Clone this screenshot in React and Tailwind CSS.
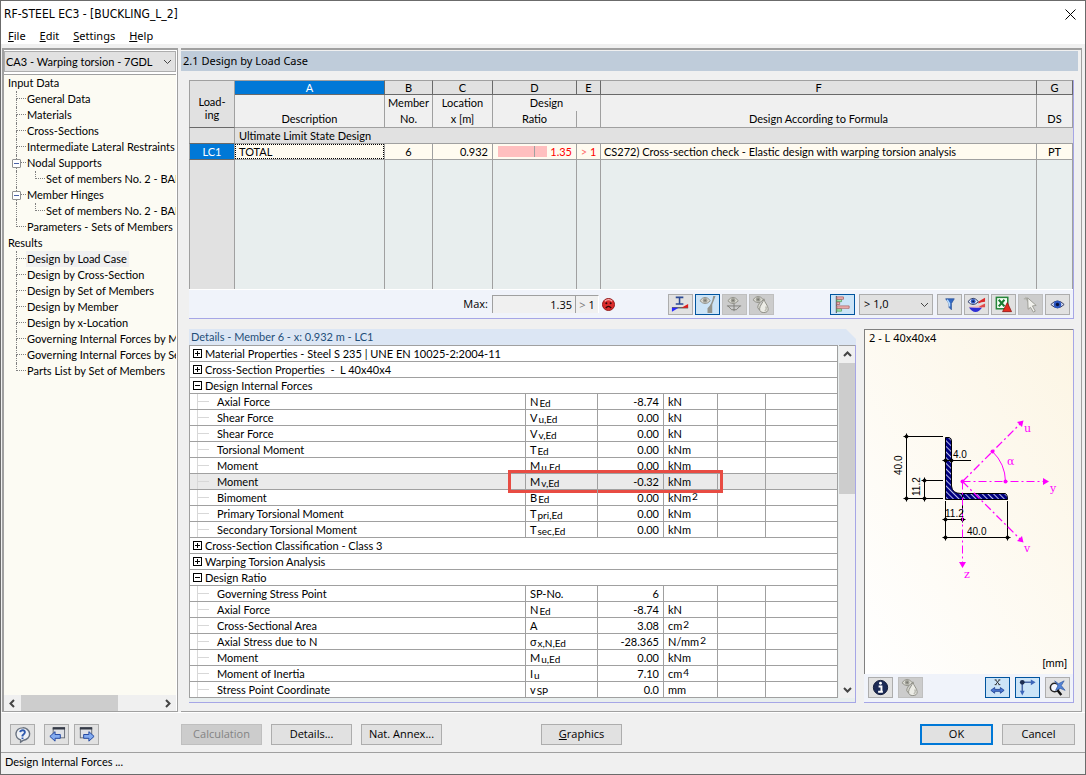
import React, { useState } from "react";

const TREE = [
  { label: "Input Data", level: 0 },
  { label: "General Data", level: 1 },
  { label: "Materials", level: 1 },
  { label: "Cross-Sections", level: 1 },
  { label: "Intermediate Lateral Restraints", level: 1 },
  { label: "Nodal Supports", level: 1, open: true },
  { label: "Set of members No. 2 - BARRA", level: 2 },
  { label: "Member Hinges", level: 1, open: true },
  { label: "Set of members No. 2 - BARRA", level: 2 },
  { label: "Parameters - Sets of Members", level: 1, last: true },
  { label: "Results", level: 0 },
  { label: "Design by Load Case", level: 1, active: true },
  { label: "Design by Cross-Section", level: 1 },
  { label: "Design by Set of Members", level: 1 },
  { label: "Design by Member", level: 1 },
  { label: "Design by x-Location", level: 1 },
  { label: "Governing Internal Forces by Member", level: 1 },
  { label: "Governing Internal Forces by Set of Members", level: 1 },
  { label: "Parts List by Set of Members", level: 1, last: true },
];

const DETAILS = [
  { group: "Material Properties - Steel S 235 | UNE EN 10025-2:2004-11" },
  { group: "Cross-Section Properties  -  L 40x40x4" },
  { group: "Design Internal Forces", open: true },
  { name: "Axial Force", sym: "N", sub: "Ed", value: "-8.74", unit: "kN" },
  { name: "Shear Force", sym: "V", sub: "u,Ed", value: "0.00", unit: "kN" },
  { name: "Shear Force", sym: "V", sub: "v,Ed", value: "0.00", unit: "kN" },
  { name: "Torsional Moment", sym: "T", sub: "Ed", value: "0.00", unit: "kNm" },
  { name: "Moment", sym: "M", sub: "u,Ed", value: "0.00", unit: "kNm" },
  { name: "Moment", sym: "M", sub: "v,Ed", value: "-0.32", unit: "kNm", marked: true },
  { name: "Bimoment", sym: "B", sub: "Ed", value: "0.00", unit: "kNm", sup: "2" },
  { name: "Primary Torsional Moment", sym: "T", sub: "pri,Ed", value: "0.00", unit: "kNm" },
  { name: "Secondary Torsional Moment", sym: "T", sub: "sec,Ed", value: "0.00", unit: "kNm" },
  { group: "Cross-Section Classification - Class 3" },
  { group: "Warping Torsion Analysis" },
  { group: "Design Ratio", open: true },
  { name: "Governing Stress Point", sym: "SP-No.", value: "6", unit: "" },
  { name: "Axial Force", sym: "N", sub: "Ed", value: "-8.74", unit: "kN" },
  { name: "Cross-Sectional Area", sym: "A", value: "3.08", unit: "cm", sup: "2" },
  { name: "Axial Stress due to N", sym: "σ", sub: "x,N,Ed", value: "-28.365", unit: "N/mm", sup: "2" },
  { name: "Moment", sym: "M", sub: "u,Ed", value: "0.00", unit: "kNm" },
  { name: "Moment of Inertia", sym: "I", sub: "u", value: "7.10", unit: "cm", sup: "4" },
  { name: "Stress Point Coordinate", sym: "v", sub: "SP", value: "0.0", unit: "mm" },
];

const Chevron = ({ dir, className }) => {
  const paths = {
    up: "M1 6 L4.5 2.5 L8 6",
    down: "M1 3 L4.5 6.5 L8 3",
    left: "M6 1 L2.5 4.5 L6 8",
    right: "M3 1 L6.5 4.5 L3 8",
  };
  return (
    <svg viewBox="0 0 9 9" className={className} fill="none" stroke="currentColor">
      <path d={paths[dir]} />
    </svg>
  );
};

const Eye = ({ x = 0, y = 0, gray }) => (
  <g transform={`translate(${x} ${y})`}>
    <path
      d="M0 4 Q5.500 -3 11 4 Q5.500 10 0 4Z"
      fill={gray ? "#dcdcd4" : "#e8eefc"}
      stroke={gray ? "#8f8f87" : "#23305e"}
    />
    <circle cx="5.500" cy="3.700" r="2.500" fill={gray ? "#a0a098" : "#2c57c4"} />
    <circle cx="5.500" cy="3.700" r="1" fill={gray ? "#787870" : "#081648"} />
  </g>
);

const ICONS = {
  section: (
    <>
      <path d="M6 2.500H14M6 9.500H14M10 2.500V9.500" stroke="#2c4a94" strokeWidth="1.600" fill="none" />
      <path d="M2 13.500H19" stroke="#222" />
      <path d="M2 13.500V17.500L9 13.500Z" fill="#2a2aff" />
      <path d="M12 13.500L19 9.500V13.500Z" fill="#e01b1b" />
    </>
  ),
  ratio: (
    <>
      <path d="M11 19V14Q16 9 17 1H19.500L16 10V19Z" fill="#94948c" />
      <Eye x="3" y="2" gray />
    </>
  ),
  support: (
    <>
      <path d="M3 11.500H18M4 11.500L8 15.500H13L17 11.500M10.500 8V17" stroke="#80807a" fill="none" />
      <Eye x="4" y="2" gray />
    </>
  ),
  drop: (
    <>
      <path d="M9.500 5C10 9 7 10 7 13Q8 16 10 16" fill="#d8d8d0" stroke="#8d8d85" />
      <Eye x="2" y="1" gray />
      <path d="M13.500 4C14 8 18 11 18 14.500A4.500 4 0 0 1 9 14.500C9 11 13 8 13.500 4Z" fill="#ecece6" stroke="#8d8d85" />
      <path d="M15.500 12Q17 15 14.500 17" stroke="#bcbcb4" strokeWidth="1.500" fill="none" />
    </>
  ),
  bars: (
    <>
      <path d="M4.500 1V19" stroke="#444" />
      <path d="M5 4.500H10V7H5ZM5 14.500H10V17H5Z" fill="#a7e5ad" stroke="#4d9c5b" strokeWidth=".8" />
      <path d="M5 2H12V4.500H5ZM5 7.500H8V10H5ZM5 11.500H18V14H5Z" fill="#f4b6b6" stroke="#a75c5c" strokeWidth=".8" />
    </>
  ),
  filter: (
    <>
      <path d="M7 4H16L13 9V15.500L10.500 13V9Z" fill="#3268c4" stroke="#2a5298" strokeWidth=".8" />
      <path d="M8.500 5L11 9V12" fill="none" stroke="#b8dcff" strokeWidth="1.500" />
    </>
  ),
  colors: (
    <>
      <path d="M13 7Q16 5 20 3V7Q16 7 13 9Z" fill="#de2929" />
      <path d="M3 13H17Q14 18 10 18T3 13" fill="#2e2ed5" />
      <path d="M3 12Q12 12 19 9V13Q12 14 3 13" fill="#f3c0c0" />
      <path d="M14 12L20 9V13H14Z" fill="#e14b4b" />
      <Eye x="2" y="3" />
    </>
  ),
  excel: (
    <>
      <rect x="3.500" y="2.500" width="12" height="12" fill="#f7fff6" stroke="#26863a" strokeWidth="1.600" />
      <path d="M6 5L12 12M12 5L6 12" stroke="#1a7d32" strokeWidth="2.200" />
      <path d="M15 8L19.500 17.500H10Z" fill="#e32d20" stroke="#8c1212" strokeWidth=".8" />
    </>
  ),
  pick: (
    <>
      <path d="M4 4H9M6 2L8 7" stroke="#a6a69e" fill="none" />
      <path d="M8 3L17 11L13 11.500L16 17L14 18L11 13L8.500 15Z" fill="#f1f1ed" stroke="#9b9b93" />
    </>
  ),
  view: (
    <>
      <path d="M4 10Q11 2.500 18 10Q11 17 4 10Z" fill="#dfe7fb" stroke="#30375e" />
      <circle cx="11" cy="10" r="4" fill="#2b56c0" />
      <circle cx="11" cy="10" r="1.800" fill="#0a1440" />
    </>
  ),
  info: (
    <>
      <circle cx="11" cy="10" r="7.500" fill="#1c2b57" stroke="#0c1533" />
      <path d="M9 9H12V14M8.500 14.500H13.500" stroke="#fff" strokeWidth="2" fill="none" />
      <circle cx="11" cy="5.500" r="1.500" fill="#fff" />
    </>
  ),
  dimension: (
    <>
      <path d="M9 2L13 7M13 2L9 7M8 2H10M12 2H14M8 7H10M12 7H14" stroke="#333" />
      <path d="M4 13L8 10V12H14V10L18 13L14 16V14H8V16Z" fill="#4a76d2" stroke="#284b9a" />
    </>
  ),
  axes: (
    <>
      <path d="M5.500 15V4.500H16" stroke="#4a68a6" strokeWidth="1.600" fill="none" />
      <path d="M14.500 1.500L19.500 4.500L14.500 7.500ZM3 13.500H8L5.500 18.500Z" fill="#3d66ba" />
      <circle cx="5.500" cy="4.500" r="2.500" fill="#1d2d50" />
    </>
  ),
  zoom: (
    <>
      <circle cx="8" cy="10" r="4.500" fill="#f5f8ff" stroke="#252525" strokeWidth="1.600" />
      <path d="M11 13L15 18" stroke="#111" strokeWidth="2.500" />
      <path d="M8 3L12 6L18 3L15 8L19 13L14 11L9 13L11.500 8Z" fill="#5283d8" stroke="#31589d" strokeWidth=".7" />
    </>
  ),
  help: (
    <>
      <path d="M11 3A7 6.500 0 0 1 12 16L9 18V15.700A7 6.500 0 0 1 11 3Z" fill="#eef1f6" stroke="#68717f" strokeWidth="1.500" />
      <path d="M8.500 7.500Q9 5.500 11.300 5.500T13.500 8Q13.500 9 11 11V12" fill="none" stroke="#2d58ae" strokeWidth="2" />
      <path d="M10 14H12" stroke="#2d58ae" strokeWidth="1.600" />
    </>
  ),
  previous: (
    <>
      <rect x="7.500" y="3.500" width="12" height="10" fill="#dfe1e6" stroke="#676d78" />
      <path d="M7 3.500H20" stroke="#333945" strokeWidth="2.500" />
      <path d="M4 12L9.500 7V10H15V14H9.500V17Z" fill="#83abf0" stroke="#2146a0" />
    </>
  ),
  next: (
    <>
      <rect x="4.500" y="3.500" width="12" height="10" fill="#dfe1e6" stroke="#676d78" />
      <path d="M4 3.500H17" stroke="#333945" strokeWidth="2.500" />
      <path d="M19 12L13.500 7V10H8V14H13.500V17Z" fill="#83abf0" stroke="#2146a0" />
    </>
  ),
};

const IconButton = ({ icon, label, active, disabled }) => {
  let tone = "border-[#adadad] bg-[#e1e1e1]";
  if (active) tone = "border-[#00549e] bg-[#cce4f7]";
  if (disabled) tone = "border-[#bfbfbf] bg-[#cccccc]";
  return (
    <button
      type="button"
      aria-label={label}
      disabled={disabled}
      className={`flex h-[21px] w-[25px] shrink-0 items-center justify-center border ${tone}`}
    >
      <svg viewBox="0 0 22 20" className="h-[19px] w-[21px]">
        {ICONS[icon]}
      </svg>
    </button>
  );
};

const PushButton = ({ children, className, disabled }) => (
  <button
    type="button"
    disabled={disabled}
    className={`h-[21px] shrink-0 font-['Open_Sans',sans-serif] text-[11px] leading-4 ${className} ${
      disabled ? "border border-[#bfbfbf] bg-[#cccccc] text-[#838383]" : "bg-[#e1e1e1]"
    }`}
  >
    {children}
  </button>
);

const TreeItem = ({ item }) => {
  if (item.level === 0) {
    return <li className="h-4 pl-1">{item.label}</li>;
  }
  return (
    <li className="flex h-4">
      {item.level === 2 && <span className="ml-3 w-[19px] shrink-0 border-l border-dotted border-[#808080]" />}
      <span className={`relative w-[10px] shrink-0 ${item.level === 1 ? "ml-3" : ""}`}>
        <span className="block h-2 border-b border-l border-dotted border-[#808080]" />
        {!item.last && item.level === 1 && (
          <span className="block h-2 border-l border-dotted border-[#808080]" />
        )}
        {item.open && (
          <button
            type="button"
            aria-label={`Collapse ${item.label}`}
            className="absolute top-1 -left-1 flex size-[9px] items-center justify-center rounded-[1px] border border-[#919191] bg-white"
          >
            <span className="h-px w-[5px] bg-[#4b63a7]" />
          </button>
        )}
      </span>
      <a href="#" className={`pr-[2px] pl-px whitespace-nowrap ${item.active ? "bg-[#f0f0f0]" : ""}`}>
        {item.label}
      </a>
    </li>
  );
};

const Sidebar = () => (
  <aside className="flex w-[176px] shrink-0 flex-col border-t-2 border-r border-b border-l-2 border-[#a0a0a0] bg-white pt-px pr-px">
    <div className="relative">
      <select
        aria-label="Design case"
        className="h-[21px] w-full appearance-none border border-[#adadad] bg-[#e1e1e1] pl-px text-[11px] leading-4"
      >
        <option>CA3 - Warping torsion - 7GDL</option>
      </select>
      <Chevron dir="down" className="pointer-events-none absolute top-[6px] right-1 size-[9px] text-[#444]" />
    </div>
    <ul className="mt-[2px] flex-1 overflow-hidden border-t border-[#a0a0a0] bg-[#fcfbf3] text-[11px] leading-4">
      {TREE.map((item, index) => (
        <TreeItem key={index} item={item} />
      ))}
    </ul>
    <div className="flex h-4 items-center bg-[#f0f0f0] text-[#444]">
      <Chevron dir="left" className="mx-1 size-[9px] stroke-2" />
      <span className="h-full w-[97px] bg-[#cdcdcd]" />
      <Chevron dir="right" className="mr-1 ml-auto size-[9px] stroke-2" />
    </div>
  </aside>
);

const LETTER = "h-[15px] border-t border-r border-b border-t-[#a0a0a0] border-r-[#696969] border-b-[#696969] bg-[#e1e1e1] p-0 font-normal leading-[13px]";
const HEAD = "h-[33px] border-r border-b border-[#a0a0a0] bg-[#f0f0f0] p-0 align-bottom font-normal";
const CELL = "h-4 border-r border-b border-[#a0a0a0] bg-[#fffbf0] p-0 leading-[15px]";
const EMPTY = "h-[129px] border-r border-[#a0a0a0] bg-[#e8eeee] p-0";

const ResultTable = () => (
  <table className="w-full table-fixed border-separate border-spacing-0 text-center text-[11px] leading-4">
    <colgroup>
      <col className="w-[46px]" />
      <col className="w-[150px]" />
      <col className="w-[48px]" />
      <col className="w-[60px]" />
      <col className="w-[84px]" />
      <col className="w-[24px]" />
      <col />
      <col className="w-[36px]" />
    </colgroup>
    <thead>
      <tr>
        <th rowSpan={2} className="border border-[#a0a0a0] border-b-[#696969] bg-[#e1e1e1] p-0 pt-2 leading-[13px] font-normal">
          Load-
          <br />
          ing
        </th>
        <th className="h-[15px] border-t border-r border-b border-t-[#a0a0a0] border-r-[#696969] border-b-[#696969] bg-[#0078d7] p-0 leading-[13px] font-normal text-white">
          A
        </th>
        {["B", "C", "D", "E", "F", "G"].map((letter) => (
          <th key={letter} className={LETTER}>
            {letter}
          </th>
        ))}
      </tr>
      <tr>
        <th className={HEAD}>Description</th>
        <th className={HEAD}>Member<br />No.</th>
        <th className={HEAD}>Location<br />x [m]</th>
        <th colSpan={2} className={HEAD}>
          <span className="block">Design</span>
          <span className="flex">
            <span className="w-[84px] border-r border-[#a0a0a0]">Ratio</span>
          </span>
        </th>
        <th className={HEAD}>Design According to Formula</th>
        <th className={HEAD}>DS</th>
      </tr>
    </thead>
    <tbody>
      <tr>
        <td className="h-4 border-x border-b border-[#a0a0a0] border-b-[#696969] bg-[#e1e1e1] p-0" />
        <td colSpan={7} className="h-4 border-b border-[#a0a0a0] bg-[#e1e1e1] p-0 pl-1 text-left leading-[15px]">
          Ultimate Limit State Design
        </td>
      </tr>
      <tr>
        <td className="h-4 border-x border-b border-[#a0a0a0] border-b-[#696969] bg-[#0078d7] p-0 leading-[15px] text-white">LC1</td>
        <td className="h-4 border-r border-b border-[#a0a0a0] bg-[#fffbf0] p-0 text-left">
          <span className="block h-[15px] border border-dotted border-black pl-[3px] leading-[13px]">TOTAL</span>
        </td>
        <td className={CELL}>6</td>
        <td className={`${CELL} pr-1 text-right`}>0.932</td>
        <td className={`${CELL} text-[#ff0000]`}>
          <span className="flex items-center justify-between pr-1 pl-[5px]">
            <span className="flex h-[11px] w-[49px] bg-[#ffbfbf]">
              <span className="w-[37px] border-r border-[#a0a0a0]" />
            </span>
            1.35
          </span>
        </td>
        <td className={`${CELL} text-[#ff0000]`}>
          <span className="text-[#ff7070]">&gt;</span> 1
        </td>
        <td className={`${CELL} truncate pl-[3px] text-left`}>
          CS272) Cross-section check - Elastic design with warping torsion analysis
        </td>
        <td className={CELL}>PT</td>
      </tr>
      <tr>
        <td className="h-[129px] border-x border-[#a0a0a0] bg-[#e1e1e1] p-0" />
        {[1, 2, 3, 4, 5, 6, 7].map((col) => (
          <td key={col} className={EMPTY} />
        ))}
      </tr>
    </tbody>
  </table>
);

const ResultFooter = () => (
  <div className="flex h-[29px] items-center border-t border-white bg-[#f0f3fa] pr-[3px] font-['Open_Sans',sans-serif] text-[11px] leading-4">
    <label htmlFor="max-ratio" className="w-[303px] pr-1 text-right">
      Max:
    </label>
    <input
      id="max-ratio"
      readOnly
      value="1.35"
      className="h-[18px] w-[84px] border-t border-r border-l border-[#a0a0a0] bg-[#f0f0f0] pr-[3px] text-right"
    />
    <span className="h-[18px] w-[23px] border-t border-r border-[#a0a0a0] border-r-white bg-[#f0f0f0] text-center leading-[18px]">
      <span className="text-[#777]">&gt;</span> 1
    </span>
    <svg viewBox="0 0 14 14" className="ml-[3px] size-[13px]" aria-label="Design ratio exceeded">
      <circle cx="7" cy="7" r="6.500" fill="#dc2c2c" stroke="#8e1515" />
      <path d="M3 3.500Q7 0 11 3.500" stroke="#f9b0b0" strokeWidth="1.500" fill="none" />
      <circle cx="4.700" cy="5.700" r="1.100" fill="#310808" />
      <circle cx="9.300" cy="5.700" r="1.100" fill="#310808" />
      <path d="M4 11Q7 7 10 11" stroke="#310808" strokeWidth="1.400" fill="none" />
    </svg>
    <div className="ml-auto flex gap-[2px]">
      <IconButton icon="section" label="Cross-section" />
      <IconButton icon="ratio" label="Show ratio" active />
      <IconButton icon="support" label="Show supports" disabled />
      <IconButton icon="drop" label="Show fire results" disabled />
    </div>
    <div className="ml-14 flex items-center">
      <IconButton icon="bars" label="Color bars" active />
      <div className="relative ml-1">
        <select
          aria-label="Ratio filter"
          className="h-[21px] w-[74px] appearance-none border border-[#adadad] bg-[#e1e1e1] pl-1 text-[11px] leading-4"
        >
          <option>&gt; 1,0</option>
        </select>
        <Chevron dir="down" className="pointer-events-none absolute top-[6px] right-1 size-[9px] text-[#444]" />
      </div>
      <div className="ml-1 flex gap-[2px]">
        <IconButton icon="filter" label="Filter" />
        <IconButton icon="colors" label="Color scale" />
        <IconButton icon="excel" label="Export to Excel" />
        <IconButton icon="pick" label="Pick member" disabled />
        <IconButton icon="view" label="View mode" />
      </div>
    </div>
  </div>
);

const DetailRow = ({ row }) => {
  if (row.group) {
    return (
      <tr>
        <td colSpan={6} className="h-4 border-x border-b border-[#a0a0a0] p-0">
          <span className="flex items-center pl-[3px] leading-[15px] whitespace-pre">
            <button
              type="button"
              aria-label={row.open ? "Collapse" : "Expand"}
              className="mr-[3px] flex size-[9px] items-center justify-center border border-black"
            >
              <svg viewBox="0 0 5 5" className="size-[5px]" stroke="#000" shapeRendering="crispEdges">
                <path d={row.open ? "M0 2.500H5" : "M0 2.500H5M2.500 0V5"} />
              </svg>
            </button>
            {row.group}
          </span>
        </td>
      </tr>
    );
  }
  const cell = "h-4 border-r border-b border-[#a0a0a0] p-0 leading-[15px]";
  return (
    <tr className={row.marked ? "bg-[#eaeaea]" : ""}>
      <td className={`${cell} border-l`}>
        <span className="flex h-[15px]">
          <span className="ml-[7px] flex w-5 items-center border-l border-[#d8d8d8]">
            <span className="h-px w-[11px] bg-[#d8d8d8]" />
          </span>
          {row.name}
        </span>
      </td>
      <td className={`${cell} relative pl-1`}>
        {row.sym}
        {row.sub && <sub className="bottom-[-1px] ml-px text-[10px]">{row.sub}</sub>}
        {row.marked && (
          <span className="absolute top-[-4px] left-[-18px] h-[23px] w-[215px] border-3 border-[#e84c43]" />
        )}
      </td>
      <td className={`${cell} pr-1 text-right`}>{row.value}</td>
      <td className={`${cell} pl-1`}>
        {row.unit}
        {row.sup && <sup className="top-[-2px] ml-px text-[10px]">{row.sup}</sup>}
      </td>
      <td className={cell} />
      <td className={cell} />
    </tr>
  );
};

const DetailsPanel = () => (
  <section className="flex min-w-0 flex-1 flex-col">
    <h2 className="h-4 bg-[#dce6f4] pl-[2px] text-[11px] leading-4 text-[#1f4e79] [clip-path:polygon(0_0,calc(100%-10px)_0,100%_10px,100%_100%,0_100%)]">
      Details - Member 6 - x: 0.932 m - LC1
    </h2>
    <div className="flex flex-1 border-r border-b border-[#a6a6e6] bg-[#e8eeee] pb-1">
      <table className="min-w-0 flex-1 table-fixed border-separate border-spacing-0 border-t border-[#a0a0a0] bg-white text-[11px] leading-4">
        <colgroup>
          <col />
          <col className="w-[72px]" />
          <col className="w-[66px]" />
          <col className="w-[54px]" />
          <col className="w-[48px]" />
          <col className="w-[72px]" />
        </colgroup>
        <tbody>
          {DETAILS.map((row, index) => (
            <DetailRow key={index} row={row} />
          ))}
        </tbody>
      </table>
      <div className="ml-px flex w-4 flex-col items-center border-t border-[#a0a0a0] bg-[#f0f0f0] text-[#444]">
        <Chevron dir="up" className="my-1 size-[9px] stroke-2" />
        <span className="h-[131px] w-full bg-[#cdcdcd]" />
        <Chevron dir="down" className="mt-auto mb-1 size-[9px] stroke-2" />
      </div>
    </div>
  </section>
);

const Tick = ({ x, y }) => (
  <>
    <circle cx={x} cy={y} r="1.500" fill="#000" />
    <path d={`M${x - 3} ${y}H${x + 3}M${x} ${y - 3}V${y + 3}`} />
  </>
);

const AngleSection = () => (
  <svg viewBox="0 0 208 200" className="mx-auto w-[208px]">
    <defs>
      <pattern id="hatch" width="4" height="4" patternUnits="userSpaceOnUse" patternTransform="rotate(-45)">
        <rect width="4" height="4" fill="#000080" />
        <path d="M0.500 0V4" stroke="#b8bde8" strokeWidth="1" />
      </pattern>
    </defs>
    <path
      d="M80.500 37.500H84Q86.500 38 86.500 41V86Q87 93.500 96 93.500H140Q142.500 94 142.500 99.500H80.500Z"
      fill="url(#hatch)"
      stroke="#000"
    />
    <g stroke="#000" fill="none">
      <path d="M41.500 36.500V98.500M41.500 36.500H78M41.500 98.500H78" />
      <path d="M59.500 80.500V98.500M59.500 80.500H78" />
      <path d="M80 60.500H106" />
      <path d="M80.500 101V138M142.500 101V138M97.500 95V120M80.500 119.500H97.500M80.500 137.500H142.500" />
      <Tick x={41.5} y={36.5} />
      <Tick x={41.5} y={98.5} />
      <Tick x={59.5} y={80.5} />
      <Tick x={59.5} y={98.5} />
      <Tick x={80.5} y={60.5} />
      <Tick x={86.5} y={60.5} />
      <Tick x={80.5} y={119.5} />
      <Tick x={97.5} y={119.5} />
      <Tick x={80.5} y={137.5} />
      <Tick x={142.5} y={137.5} />
    </g>
    <g stroke="#ff00ff" fill="none" strokeDasharray="8 3 2 3">
      <path d="M97.500 81.500H178" />
      <path d="M97.500 81.500V162" />
      <path d="M97.500 81.500L155 24" strokeWidth="1.300" />
      <path d="M97.500 81.500L155 139" strokeWidth="1.300" />
    </g>
    <path d="M127.500 51.500A43 43 0 0 1 140.500 81.500" stroke="#ff00ff" fill="none" />
    <g fill="#ff00ff">
      <path d="M184 81.500L178 78V85ZM97.500 168L94 162H101ZM158.500 20.500L157 27L152 22ZM158.500 142.500L152 141L157 136Z" />
      <circle cx="97.500" cy="81.500" r="2" />
      <circle cx="127.500" cy="51.500" r="2" />
      <circle cx="140.500" cy="81.500" r="2" />
    </g>
    <g className="font-['Liberation_Sans',sans-serif] text-[10px]">
      <text x="88" y="58">4.0</text>
      <text x="80" y="117">11.2</text>
      <text x="102" y="135">40.0</text>
      <text transform="translate(37 75) rotate(-90)">40.0</text>
      <text transform="translate(55 96) rotate(-90)">11.2</text>
    </g>
    <g fill="#ff00ff" className="font-['DejaVu_Serif',serif] text-[11px]">
      <text x="159" y="32">u</text>
      <text x="185" y="92">y</text>
      <text x="159" y="152">v</text>
      <text x="99" y="178">z</text>
      <text x="142" y="65">α</text>
    </g>
  </svg>
);

const SectionPanel = () => (
  <section className="flex w-[210px] shrink-0 flex-col border-r border-b border-[#a6a6e6]">
    <div className="flex flex-1 flex-col border-t border-l border-[#808080] bg-linear-to-tr from-white to-[#fcf5e4] text-[11px] leading-4">
      <h2 className="pl-1 font-['Noto_Sans',sans-serif]">2 - L 40x40x4</h2>
      <div className="flex-1 pt-[54px]">
        <AngleSection />
      </div>
      <p className="pr-[6px] pb-[3px] text-right font-['Liberation_Sans',sans-serif]">[mm]</p>
    </div>
    <div className="flex h-[28px] items-center bg-[#f0f3fa] pr-[3px] pb-px pl-1">
      <IconButton icon="info" label="Section info" />
      <span className="ml-[5px]">
        <IconButton icon="drop" label="Section fire view" disabled />
      </span>
      <div className="ml-auto flex gap-[5px]">
        <IconButton icon="dimension" label="Dimensions" active />
        <IconButton icon="axes" label="Axes" active />
        <IconButton icon="zoom" label="Reset zoom" />
      </div>
    </div>
  </section>
);

const App = () => {
  const [open, setOpen] = useState(true);

  if (!open) return null;

  return (
    <div className="flex min-h-screen flex-col border border-[#6b6b6b] bg-[#f0f0f0] font-[Lato,sans-serif] text-[11px] leading-4 text-black">
      {/* TITLE + MENU */}
      <header className="bg-white">
        <div className="flex h-[26px] items-center pl-[3px]">
          <h1 className="font-['DejaVu_Sans_Condensed',sans-serif] text-[12px]">RF-STEEL EC3 - [BUCKLING_L_2]</h1>
          <button type="button" aria-label="Close" onClick={() => setOpen(false)} className="mr-[9px] ml-auto">
            <svg viewBox="0 0 11 11" className="size-[11px]" stroke="#000">
              <path d="M0.500 0.500L10.500 10.500M10.500 0.500L0.500 10.500" />
            </svg>
          </button>
        </div>
        <nav className="flex gap-[14px] pt-px pl-[7px] font-['Noto_Sans',sans-serif] text-[11px] leading-4">
          <a href="#"><u>F</u>ile</a>
          <a href="#"><u>E</u>dit</a>
          <a href="#"><u>S</u>ettings</a>
          <a href="#"><u>H</u>elp</a>
        </nav>
      </header>

      {/* MAIN */}
      <main className="flex flex-1 pt-1 pr-[3px] pl-px">
        <Sidebar />
        <div className="ml-[3px] flex min-w-0 flex-1 flex-col border-t-2 border-r border-b border-[#a0a0a0] pt-px">
          <h2 className="mr-[3px] h-5 bg-[#bfccda] pl-[2px] font-['Noto_Sans',sans-serif] text-[11px] leading-5">
            2.1 Design by Load Case
          </h2>
          <div className="flex flex-1 flex-col pt-[9px] pr-[7px] pb-2 pl-2">
            <section className="border-r border-b border-[#a6a6e6]">
              <ResultTable />
              <ResultFooter />
            </section>
            <div className="mt-[10px] flex flex-1 gap-2">
              <DetailsPanel />
              <SectionPanel />
            </div>
          </div>
        </div>
      </main>

      {/* BUTTONS */}
      <div className="flex h-[40px] items-center border-t border-white pt-[3px] pr-[10px] pl-[9px] text-[11px]">
        <div className="flex w-[171px] shrink-0">
          <IconButton icon="help" label="Help" />
          <span className="mr-[5px] ml-[9px]">
            <IconButton icon="previous" label="Previous table" />
          </span>
          <IconButton icon="next" label="Next table" />
        </div>
        <div className="flex gap-[9px]">
          <PushButton disabled className="w-[81px]">Calculation</PushButton>
          <PushButton className="w-[81px] border border-[#adadad]">Details...</PushButton>
          <PushButton className="w-[81px] border border-[#adadad]">Nat. Annex...</PushButton>
        </div>
        <PushButton className="ml-[99px] w-[81px] border border-[#adadad]"><u>G</u>raphics</PushButton>
        <div className="ml-auto flex gap-[9px]">
          <PushButton className="w-[73px] border-2 border-[#0078d7]">OK</PushButton>
          <PushButton className="w-[73px] border border-[#adadad]">Cancel</PushButton>
        </div>
      </div>

      {/* STATUS BAR */}
      <footer className="h-[22px] border-t border-[#a0a0a0] pt-px pl-1 text-[11px] leading-4">
        Design Internal Forces ...
      </footer>
    </div>
  );
};

export default App;
